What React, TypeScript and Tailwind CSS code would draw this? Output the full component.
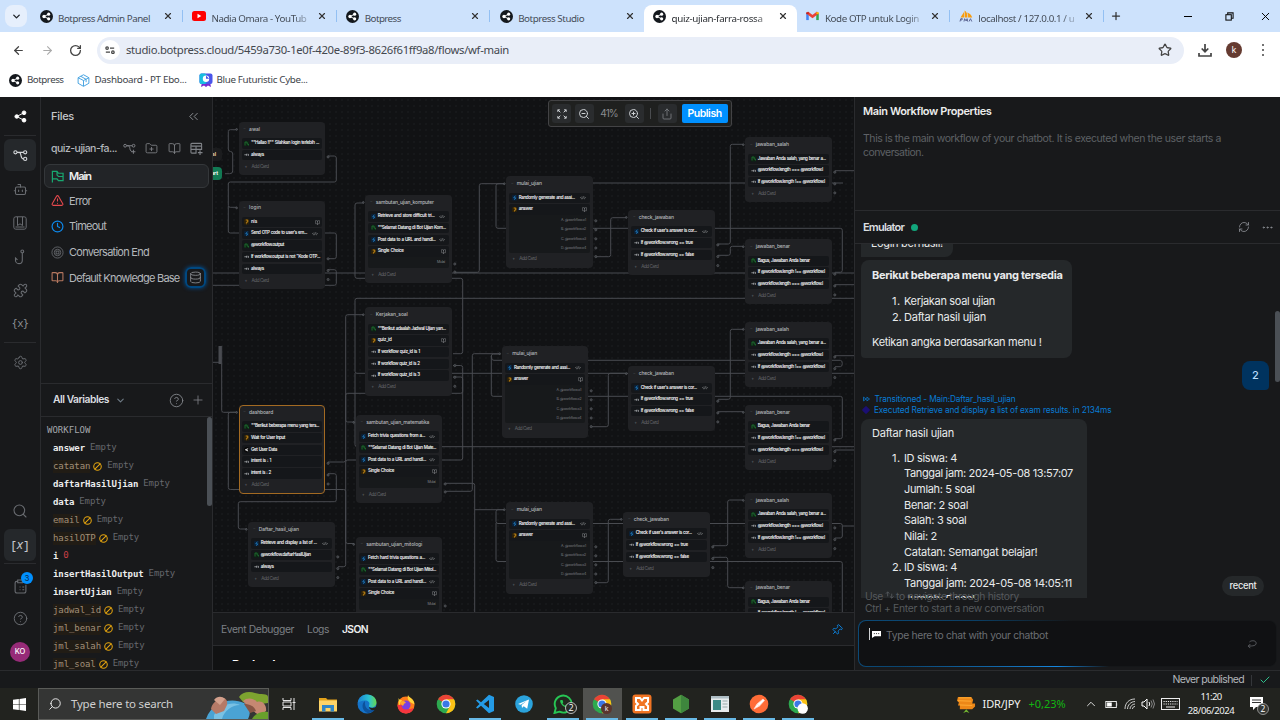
import { useLayoutEffect, useRef, useState } from 'react';
import type { ReactNode } from 'react';
import {
  ArrowLeft, ArrowRight, RotateCw, Star, Puzzle, Settings, Search, CircleHelp, ChevronsLeft,
  FolderPlus, BookOpen, TriangleAlert, Clock, Database, ChevronDown, ChevronUp, Plus, ZoomIn, ZoomOut,
  Share, RefreshCw, Ellipsis, Pin, Check, Bot, X, Ban,
} from 'lucide-react';

/* Single line of text whose tracking is adjusted so that it fills a known width. */
function T({ w, className = '', children }: { w: number; className?: string; children: string }) {
  const ref = useRef<HTMLSpanElement>(null);
  const [spacing, setSpacing] = useState(0);
  useLayoutEffect(() => {
    const natural = ref.current!.getBoundingClientRect().width;
    setSpacing((w - natural) / children.length);
  }, [w, children]);
  return (
    <span ref={ref} className={`inline-block shrink-0 whitespace-pre ${className}`} style={{ letterSpacing: spacing }}>
      {children}
    </span>
  );
}

function BotLogo({ className = 'size-[13px]' }: { className?: string }) {
  return (
    <svg viewBox="0 0 14 14" className={`${className} shrink-0`}>
      <circle cx="7" cy="7" r="7" fill="#14181d" />
      <path d="M4.3 7 9 4.6M4.3 7 9 9.4" stroke="#fff" strokeWidth="1" />
      <circle cx="4.3" cy="7" r="1.8" fill="#fff" />
      <circle cx="9.3" cy="4.5" r="1.7" fill="#fff" />
      <circle cx="9.3" cy="9.5" r="1.7" fill="#fff" />
    </svg>
  );
}

function FlowGlyph({ className, plus }: { className: string; plus?: boolean }) {
  return (
    <svg viewBox="0 0 16 16" className={className} fill="none" stroke="currentColor" strokeWidth="1.2">
      <circle cx="2.6" cy="4.6" r="1.7" />
      <circle cx="13" cy="4.6" r="1.7" />
      {plus ? <path d="M12.8 9.5v5M10.3 12h5" /> : <circle cx="13" cy="11.6" r="1.7" />}
      <path d="M4.3 4.6h7M5 4.6c3 0 3 1 3.500 3.500s1 3.500 2.800 3.500" />
    </svg>
  );
}

function TabIcon({ kind }: { kind: string }) {
  if (kind === 'yt')
    return (
      <svg viewBox="0 0 14 10" className="h-[10px] w-[14px]">
        <rect width="14" height="10" rx="2.500" fill="#f00" />
        <path d="M5.500 2.800v4.400L9.300 5z" fill="#fff" />
      </svg>
    );
  if (kind === 'gmail')
    return (
      <svg viewBox="0 0 14 11" className="h-[10px] w-[13px]" fill="none" strokeWidth="2.800">
        <path d="M1.500 2.500V10" stroke="#4285f4" />
        <path d="M12.500 2.500V10" stroke="#34a853" />
        <path d="M1.200 1.800 7 6.200l5.800-4.400" stroke="#ea4335" />
        <path d="M11.100 3V1.500h2.800v2z" fill="#fbbc04" stroke="none" />
        <path d="M2.900 3V1.500H.1v2z" fill="#c5221f" stroke="none" />
      </svg>
    );
  if (kind === 'pma')
    return (
      <svg viewBox="0 0 14 12" className="h-[12px] w-[14px]">
        <path d="M1.500 7.500 5 2v5.500zM5.600 7.500V.5c2.400 1.500 3 4 2.800 7zM9 7.500c.4-2-.2-4-1-5 2.500.6 4.500 2.500 5.200 5z" fill="#f89c0e" />
        <path d="M1 11.500 1.800 8.700h1.600L2.800 10H1.600M5 11.500l.6-2.800L7.200 11l.9-2.300.5 2.800M10 11.500l1.500-2.800 1.300 2.800" stroke="#5d6693" fill="none" />
      </svg>
    );
  return <BotLogo />;
}

const tabs = [
  { icon: 'bp', label: 'Botpress Admin Panel', w: 92 },
  { icon: 'yt', label: 'Nadia Omara - YouTub', w: 95, fade: true },
  { icon: 'bp', label: 'Botpress', w: 36 },
  { icon: 'bp', label: 'Botpress Studio', w: 66 },
  { icon: 'bp', label: 'quiz-ujian-farra-rossa', w: 91, fade: true, active: true },
  { icon: 'gmail', label: 'Kode OTP untuk Login', w: 94, fade: true },
  { icon: 'pma', label: 'localhost / 127.0.0.1 / u', w: 96, fade: true },
];

function Browser() {
  return (
    <header className="h-[97px] shrink-0 bg-white font-['Noto_Sans','Open_Sans',sans-serif]">
      <div className="flex h-8 items-center bg-[#cde2fc] pl-[5px]">
        <div className="mr-[3px] flex size-[22px] shrink-0 items-center justify-center rounded-lg bg-[#e6effc]">
          <ChevronDown className="size-[11px] text-[#1f2328]" strokeWidth={3} />
        </div>
        {tabs.map((t, i) => (
          <div key={i} className="flex h-8 w-[153.400px] shrink-0 items-center">
            <div
              className={`flex w-full items-center pr-[9px] pl-[9px] ${
                t.active ? 'mt-[5px] h-[27px] rounded-t-lg bg-white pb-[5px]' : 'h-8'
              }`}
            >
              <span className="flex w-[14px] shrink-0 justify-center"><TabIcon kind={t.icon} /></span>
              <span
                className={`ml-[5px] flex-1 overflow-hidden ${
                  t.fade ? '[mask-image:linear-gradient(to_right,black_78%,transparent_97%)]' : ''
                }`}
              >
                <T w={t.w} className={`text-[9.800px] ${t.active ? 'text-[#2c2f33]' : 'text-[#454d58]'}`}>{t.label}</T>
              </span>
              <X className="size-[10px] shrink-0 text-[#333]" strokeWidth={2.800} />
            </div>
            {!t.active && i !== 3 && <span className="h-3 w-px shrink-0 bg-[#93c0f3]" />}
          </div>
        ))}
        <Plus className="ml-[6px] size-[12px] text-[#333]" strokeWidth={2.500} />
        <span className="ml-[62px] h-px w-[8px] bg-black" />
        <svg viewBox="0 0 10 10" className="ml-[33px] size-[9px]" fill="none" stroke="#111" strokeWidth="1.200">
          <rect x="1" y="3" width="6" height="6" />
          <path d="M3 3V1h6v6H7" />
        </svg>
        <X className="ml-[25px] size-[13px] text-black" strokeWidth={1.800} />
      </div>
      <div className="flex h-9 items-center rounded-t-lg bg-white pl-[12px]">
        <ArrowLeft className="size-[13px] text-[#444]" strokeWidth={2.300} />
        <ArrowRight className="ml-4 size-[13px] text-[#aaa]" strokeWidth={2} />
        <RotateCw className="ml-[15px] size-[13px] text-[#444]" strokeWidth={2.400} />
        <div className="ml-[15px] flex h-[27px] w-[1087px] items-center rounded-full bg-[#e9eef8] pr-[12px] pl-[3px]">
          <span className="flex size-[20px] items-center justify-center rounded-full bg-white">
            <svg viewBox="0 0 12 10" className="w-[10px]" fill="none" stroke="#444" strokeWidth="1.500">
              <circle cx="2.500" cy="2.500" r="1.500" /><path d="M6 2.500h5M1 7.500h5" /><circle cx="9.500" cy="7.500" r="1.500" />
            </svg>
          </span>
          <T w={383} className="ml-[6px] text-[11.300px] text-[#43474e]">studio.botpress.cloud/5459a730-1e0f-420e-89f3-8626f61ff9a8/flows/wf-main</T>
          <Star className="ml-auto size-[14px] text-[#444]" strokeWidth={2.200} />
        </div>
        <svg viewBox="0 0 14 14" className="ml-[14px] size-[14px]" fill="none" stroke="#444" strokeWidth="1.700">
          <path d="M7 1v7.500M3.700 5.500 7 8.700l3.300-3.200M1 10v3h12v-3" />
        </svg>
        <span className="ml-[14px] flex size-[16px] items-center justify-center rounded-full bg-[#653b31] text-[9px] text-white">k</span>
        <span className="ml-[20px] flex flex-col gap-[2.500px]">
          <i className="size-[2.300px] rounded-full bg-[#444]" /><i className="size-[2.300px] rounded-full bg-[#444]" /><i className="size-[2.300px] rounded-full bg-[#444]" />
        </span>
      </div>
      <div className="flex h-[24px] items-center pl-[9px] text-[9.800px] text-[#40444a]">
        <BotLogo />
        <T w={36.500} className="ml-[5px]">Botpress</T>
        <svg viewBox="0 0 14 14" className="ml-[13px] size-[13px]" fill="none" stroke="#3f9fe0" strokeWidth="1">
          <path d="M7 .8 12.800 4v6L7 13.300 1.200 10V4zM1.200 4 7 7l5.800-3M7 7v6M4 2.500l5.800 3.200v3" />
        </svg>
        <T w={92} className="ml-[5px]">Dashboard - PT Ebo...</T>
        <svg viewBox="0 0 14 14" className="ml-[12px] size-[14px]">
          <path d="m3 9-1 5 3-1.500L7 14l2-1.500 3 1.500-1-5z" fill="#7a2bd2" />
          <rect x=".5" y=".5" width="13" height="10.500" rx="2" fill="#4a55ea" />
          <rect x=".5" y=".5" width="7" height="10.500" rx="2" fill="#19bde0" />
          <circle cx="7" cy="5.700" r="3.200" fill="#fff" /><path d="M7 2.500v3.200h3.200" fill="#4a55ea" />
        </svg>
        <T w={91} className="ml-[4px]">Blue Futuristic Cybe...</T>
      </div>
    </header>
  );
}

function RailItem({ children, className, active }: { children: ReactNode; className: string; active?: boolean }) {
  return (
    <div className={`flex w-10 shrink-0 items-center justify-center ${className}`}>
      <div className={`flex size-8 shrink-0 items-center justify-center rounded-md ${active ? 'bg-[#25282b]' : ''}`}>{children}</div>
    </div>
  );
}

function Rail() {
  return (
    <nav className="flex w-[41px] shrink-0 flex-col border-r border-[#2a2b2e] text-[#696c71]">
      <div className="flex h-[38px] items-center justify-center">
        <svg viewBox="0 0 14 14" className="size-[13px]" fill="#fff" stroke="#fff">
          <path d="M3 7 11 2.800M3 7l8 4.200" /><circle cx="2.900" cy="7" r="1.900" /><circle cx="10.800" cy="3" r="2" /><circle cx="10.800" cy="11" r="2" />
        </svg>
      </div>
      <div className="mx-1 h-px bg-[#2a2b2e]" />
      <RailItem className="h-[38px]" active><FlowGlyph className="size-[15px] text-[#d5d8db]" /></RailItem>
      <RailItem className="h-[30px]"><Bot className="size-[15px]" strokeWidth={1.700} /></RailItem>
      <RailItem className="h-[37px]">
        <svg viewBox="0 0 14 14" className="size-[14px]" fill="none" stroke="currentColor"><rect x=".8" y=".8" width="12.400" height="12.400" rx="2" /><path d="M4.500 1v8.500L7 7.800l2.500 1.700V1M2.500 11h9" /></svg>
      </RailItem>
      <RailItem className="h-[31px]">
        <svg viewBox="0 0 14 16" className="h-[16px] w-[14px]" fill="none" stroke="currentColor" strokeWidth="1.100"><circle cx="9.300" cy="2.400" r="1.400" /><path d="M9.300 3.800v7.400a3.400 3.400 0 0 1-6.800 0V9l2 1.800" /></svg>
      </RailItem>
      <RailItem className="h-[37px]"><Puzzle className="size-[15px]" strokeWidth={1.700} /></RailItem>
      <RailItem className="h-[30px]"><T w={17} className="font-['DejaVu_Sans_Mono',monospace] text-[10.500px] text-[#8b8e93]">{'{x}'}</T></RailItem>
      <div className="mx-1 mt-[3px] h-px shrink-0 bg-[#2a2b2e]" />
      <RailItem className="h-[38px]"><Settings className="size-[15px]" strokeWidth={1.600} /></RailItem>
      <div className="flex-1" />
      <RailItem className="h-[34px]"><Search className="size-[16px]" strokeWidth={1.600} /></RailItem>
      <RailItem className="h-[34px]" active>
        <span className="flex items-center font-['Noto_Sans',sans-serif] text-[13px] leading-none text-[#c3c6ca]">[<i className="px-px pb-px">x</i>]</span>
      </RailItem>
      <div className="mx-1 mt-px h-px shrink-0 bg-[#2a2b2e]" />
      <div className="relative flex h-[40px] shrink-0 items-center justify-center pt-[4px]">
        <svg viewBox="0 0 14 16" className="h-[15px] w-[13px]" fill="none" stroke="currentColor" strokeWidth="1.200"><path d="M4 2.500H3A1.800 1.800 0 0 0 1.200 4.300v8.900A1.800 1.800 0 0 0 3 15h8a1.800 1.800 0 0 0 1.800-1.800V6M4 1h5v3H4zM6 8.500h1M9 8.500h2M6 11.500h1M9 11.500h2" /></svg>
        <span className="absolute top-[8px] left-[21px] flex size-[12px] items-center justify-center rounded-full bg-[#0090ff] text-[8px] text-[#0d2b4a]">3</span>
      </div>
      <RailItem className="h-[29px]"><CircleHelp className="size-[15px]" strokeWidth={1.600} /></RailItem>
      <div className="flex h-[37px] shrink-0 items-center justify-center">
        <span className="flex size-5 items-center justify-center rounded-full bg-[#962b78] text-[7.500px] font-medium text-white">KO</span>
      </div>
    </nav>
  );
}

const variables: [string, string, boolean][] = [
  ['answer', 'Empty', false], ['catatan', 'Empty', true], ['daftarHasilUjian', 'Empty', false], ['data', 'Empty', false],
  ['email', 'Empty', true], ['hasilOTP', 'Empty', true], ['i', '0', false], ['insertHasilOutput', 'Empty', false],
  ['insertUjian', 'Empty', false], ['jadwal_id', 'Empty', true], ['jml_benar', 'Empty', true], ['jml_salah', 'Empty', true],
  ['jml_soal', 'Empty', true],
];

function Files() {
  const row = 'flex h-[25.700px] items-center gap-[5px] pl-[7px]';
  return (
    <aside className="flex w-[172px] shrink-0 flex-col border-r border-[#2a2b2e] text-[#b4b7bb]">
      <div className="flex h-[38px] items-center pr-[11px] pl-[10px]">
        <T w={23} className="text-[11px] font-medium text-[#c5c7ca]">Files</T>
        <ChevronsLeft className="ml-auto size-[15px] text-[#8a8d92]" strokeWidth={1.600} />
      </div>
      <div className="flex h-[27px] items-center pl-[10px] text-[#7f8287]">
        <T w={66} className="mr-[6px] text-[10.500px] font-medium text-[#b4b7bb]">quiz-ujian-fa...</T>
        <FlowGlyph plus className="size-[13px]" />
        <FolderPlus className="ml-[9px] size-[13px]" strokeWidth={1.600} />
        <BookOpen className="ml-[10px] size-[13px]" strokeWidth={1.600} />
        <svg viewBox="0 0 14 14" className="ml-[9px] size-[13px]" fill="none" stroke="currentColor" strokeWidth="1.200"><rect x="1" y="1.500" width="11.500" height="3" rx="1" /><path d="M1 4v7a1 1 0 0 0 1 1h5M1 8h11.500V4M6.500 4.500V12M10.800 9v5M8.500 11.500h5" /></svg>
      </div>
      <div className="mx-[3px] mt-[2px] flex flex-col text-[11px]">
        <div className="flex h-[24px] items-center gap-[5px] rounded-md border border-[#34373a] bg-[#222427] pl-[6px]">
          <svg viewBox="0 0 14 14" className="size-[13px]" fill="none" stroke="#18a870" strokeWidth="1.300"><path d="M1.500 13.500V1.500h5l1.500 2h5v8H8l-1.500-2H1.500M6.500 1.500v4L8 7h5" /></svg>
          <T w={22} className="font-semibold text-[#eff0f1]">Main</T>
        </div>
        <div className={row}><TriangleAlert className="size-[13px] text-[#e5484d]" /><T w={22}>Error</T></div>
        <div className={row}><Clock className="size-[13px] text-[#0d87e9]" strokeWidth={2.200} /><T w={37}>Timeout</T></div>
        <div className={row}>
          <svg viewBox="0 0 14 14" className="size-[13px]" fill="none" stroke="#63666b"><circle cx="7" cy="7" r="6" /><circle cx="7" cy="7" r="3.500" /><rect x="5.500" y="5.500" width="3" height="3" /></svg>
          <T w={80}>Conversation End</T>
        </div>
        <div className={row}>
          <BookOpen className="size-[13px] shrink-0 text-[#b5775f]" /><T w={110.500}>Default Knowledge Base</T>
          <span className="flex size-[21px] shrink-0 items-center justify-center rounded-md border-2 border-[#004880] shadow-[0_0_4px_#00529a]"><Database className="size-[13px] text-[#8a8d92]" strokeWidth={1.600} /></span>
        </div>
      </div>
      <div className="flex-1" />
      <div className="flex h-[34px] shrink-0 items-center border-y border-[#2a2b2e] pr-[7px] pl-[12px] text-[#7f8287]">
        <T w={56} className="text-[10.300px] font-semibold text-[#dcdee0]">All Variables</T>
        <ChevronDown className="ml-[6px] size-[11px] text-[#6f7b86]" strokeWidth={2.400} />
        <CircleHelp className="ml-auto size-[15px]" strokeWidth={1.500} />
        <Plus className="ml-[7px] size-[14px]" strokeWidth={1.400} />
      </div>
      <div className="flex h-[253px] shrink-0 justify-between overflow-hidden font-['DejaVu_Sans_Mono',monospace] text-[9px]">
        <div className="pt-[6px]">
          <div className="flex h-[16px] items-center pl-[6px]"><T w={43.500} className="text-[9px] text-[#a3a6ab]">WORKFLOW</T></div>
          {variables.map(([name, value, unused]) => (
            <div key={name} className="flex h-[18px] items-center pl-[12px]">
              <T w={name.length * 5.330} className={`leading-[13px] ${unused ? 'bg-[#211c15] text-[#a18f78]' : 'font-bold text-[#eceded]'}`}>{name}</T>
              {unused && <Ban className="ml-[3px] size-[9px] -scale-x-100 text-[#e5a50f]" strokeWidth={2.800} />}
              <T w={value.length * 5.300} className={`ml-[5px] ${value === '0' ? 'text-[#c93f45]' : 'text-[#66686d]'}`}>{value}</T>
            </div>
          ))}
        </div>
        <div className="h-[89px] w-[5px] rounded-full bg-[#4b5056]" />
      </div>
    </aside>
  );
}

type Card = [icon: string, text: string, width: number, tail?: string];
type FlowNode = { x: number; y: number; title: string; tw: number; cards: Card[]; extra?: string; selected?: boolean };

const salah = (y: number): FlowNode => ({
  x: 745.300, y, title: 'jawaban_salah', tw: 33,
  cards: [['msg', 'Jawaban Anda salah, yang benar a...', 68], ['if', '@workflow.length === @workflow.l', 65], ['if', 'If @workflow.length !== @workflow.l', 67]],
});
const benar = (y: number): FlowNode => ({
  x: 745.300, y, title: 'jawaban_benar', tw: 34,
  cards: [['msg', 'Bagus, Jawaban Anda benar', 52], ['if', 'If @workflow.length !== @workflow.l', 67], ['if', '@workflow.length === @workflow.l', 65]],
});
const check = (x: number, y: number): FlowNode => ({
  x, y, title: 'check_jawaban', tw: 35,
  cards: [['code', "Check if user's answer is cor...", 56, 'code'], ['if', 'If @workflow.wrong == true', 52], ['if', 'If @workflow.wrong == false', 53]],
});
const mulai = (x: number, y: number): FlowNode => ({
  x, y, title: 'mulai_ujian', tw: 25, extra: 'answers',
  cards: [['code', 'Randomly generate and assi...', 56, 'code'], ['ask', 'answer', 14, 'book']],
});
const sambutan = (x: number, y: number, title: string, tw: number, first: string, second: string): FlowNode => ({
  x, y, title, tw, extra: 'choice',
  cards: [['code', first, 57, 'code'], ['msg', second, 68], ['code', 'Post data to a URL and handl...', 58, 'code'], ['ask', 'Single Choice', 26, 'book']],
});

const nodes: FlowNode[] = [
  { x: 238.600, y: 122, title: 'awal', tw: 11, cards: [['msg', '**Hallao !!** Silahkan login terlebih ...', 68], ['if', 'always', 13]] },
  {
    x: 238.600, y: 200.500, title: 'login', tw: 12,
    cards: [['ask', 'nis', 6, 'book'], ['code', "Send OTP code to user's em...", 56, 'code'], ['msg', '@workflow.output', 33], ['if', 'If workflow.output is not "Kode OTP...', 69], ['if', 'always', 13]],
  },
  sambutan(365.300, 195, 'sambutan_ujian_komputer', 58, 'Retrieve and store difficult tri...', '**Selamat Datang di Bot Ujian Kom...'),
  {
    x: 365.300, y: 307.300, title: 'Kerjakan_soal', tw: 32,
    cards: [['msg', '**Berikut adaalah Jadwal Ujian yan...', 68], ['ask', 'quiz_id', 14, 'book'], ['if', 'If workflow quiz_id is 1', 42], ['if', 'If workflow quiz_id is 2', 42], ['if', 'If workflow quiz_id is 3', 42]],
  },
  {
    x: 238.600, y: 405, title: 'dashboard', tw: 24, selected: true,
    cards: [['msg', '**Berikut beberapa menu yang ters...', 68], ['ask', 'Wait for User Input', 34], ['user', 'Get User Data', 26], ['if', 'intent is : 1', 20], ['if', 'intent is : 2', 20]],
  },
  {
    x: 248.300, y: 522, title: 'Daftar_hasil_ujian', tw: 40,
    cards: [['code', 'Retrieve and display a list of ...', 56, 'code'], ['msg', '@workflow.daftarHasilUjian', 50], ['if', 'always', 13]],
  },
  sambutan(355.700, 415, 'sambutan_ujian_matematika', 63, 'Fetch trivia questions from a...', '**Selamat Datang di Bot Ujian Mate...'),
  sambutan(355.700, 537, 'sambutan_ujian_mitologi', 56, 'Fetch hard trivia questions a...', '**Selamat Datang di Bot Ujian Mitol...'),
  mulai(506.300, 176.300), mulai(501.700, 346.300), mulai(506.300, 502.300),
  check(628.300, 210), check(628.300, 366.300), check(623.300, 512),
  salah(137.300), salah(322), salah(493), benar(239.300), benar(405), benar(580.500),
];

const edges = [
  'M225 173.700H229.700Q232.700 173.700 232.700 171V154Q232.700 151.500 230.500 151.500Q228.300 151.500 228.300 149V131.700Q228.300 129.700 230.300 129.700H237',
  'M328 156H334.300Q336.300 156 336.300 158V180Q336.300 182 334.300 182H230.300Q228.300 182 228.300 184V205.300Q228.300 207.300 230.300 207.300H237',
  'M228.300 206V231Q228.300 233 230.300 233H334.300Q336.300 233 336.300 235V256.700Q336.300 258.700 334.300 258.700H328',
  'M328 269.700H334.300Q336.300 269.700 336.300 271.700V283.300Q336.300 285.300 334.300 285.300H212',
  'M212 273H854',
  'M364 203H357Q355 203 355 205V276.300Q355 278.300 357 278.300H460.700Q462.700 278.300 462.700 280.300V351.700Q462.700 353.700 460.700 353.700H453',
  'M854 298.300H357Q355 298.300 355 300.300V371.300Q355 373.300 357 373.300H854',
  'M364 314.700H347.700Q345.700 314.700 345.700 316.700V460Q345.700 462 343.700 462H328',
  'M453 365.500H460.700Q462.700 365.500 462.700 367.500V391.300Q462.700 393.300 460.700 393.300H347.700Q345.700 393.300 345.700 395.300V420Q345.700 422 347.700 422H354',
  'M453 377H460.700Q462.700 377 462.700 379V458Q462.700 460 460.700 460H347.700Q345.700 460 345.700 462',
  'M221.700 346V410.300Q221.700 412.300 223.700 412.300H237M212 362.300H220',
  'M237 412.300H230.300Q228.300 412.300 228.300 414.300V487.500Q228.300 489.500 230.300 489.500H343.700Q345.700 489.500 345.700 491.500V564.700Q345.700 566.700 343.700 566.700H338',
  'M345.700 462V541.500Q345.700 543.500 347.700 543.500H354',
  'M328 473.700H334.300Q336.300 473.700 336.300 475.700V499.700Q336.300 501.700 334.300 501.700H240.300Q238.300 501.700 238.300 503.700V527Q238.300 529 240.300 529H247',
  'M355 373V444.700Q355 446.700 357 446.700H854',
  'M445 483.300H472.700Q474.700 483.300 474.700 485.300V612M474.700 509.700H504',
  'M445 491.300H470.300Q472.300 491.300 472.300 489.300V355.700Q472.300 353.700 474.300 353.700H500',
  'M454 272.300H477.300Q479.300 272.300 479.300 270.300V185.700Q479.300 183.700 481.300 183.700H505',
  'M505 183.700H498Q496 183.700 496 185.700V226.300Q496 228.300 498 228.300H840.300Q842.300 228.300 842.300 230.300V270.300Q842.300 272.300 840.300 272.300H835',
  'M593 183H843', 'M596 256.700H608.700Q610.700 256.700 610.700 254.700V219.700Q610.700 217.700 612.700 217.700H627',
  'M718 244H728.300Q730.300 244 730.300 242V146.300Q730.300 144.300 732.300 144.300H743',
  'M718 255.300H728.300Q730.300 255.300 730.300 253.300V248.300Q730.300 246.300 732.300 246.300H743',
  'M835 170.700H854M835 284.700H854M835 355.700H854M835 450H854M842.300 526H854',
  'M718 399.300H728.300Q730.300 399.300 730.300 397.300V331.300Q730.300 329.300 732.300 329.300H743', 'M718 411.700H743',
  'M500 354H493.300Q491.300 354 491.300 356V394.300Q491.300 396.300 493.300 396.300H840.300Q842.300 396.300 842.300 398.300V436.700Q842.300 438.700 840.300 438.700H835',
  'M491.300 356Q491.300 360.300 494 360.300H840.300Q842.300 360.300 842.300 363.500Q842.300 366.700 840.300 366.700H835',
  'M592 426.700H606.300Q608.300 426.700 608.300 424.700V375.300Q608.300 373.300 610.300 373.300H627',
  'M504 509.700H498Q496 509.700 496 511.700V521.500Q496 523.500 498 523.500H840.300Q842.300 523.500 842.300 525.500V536Q842.300 538 840.300 538H835',
  'M496 523V559.500Q496 561.500 498 561.500H840.300Q842.300 561.500 842.300 563.500V612',
  'M596 582.700H606.300Q608.300 582.700 608.300 580.700V521.300Q608.300 519.300 610.300 519.300H622',
  'M713 545.700H725.700Q727.700 545.700 727.700 543.700V502Q727.700 500 729.700 500H743',
  'M713 557.300H725.700Q727.700 557.300 727.700 559.300V585.700Q727.700 587.700 729.700 587.700H743',
];

function CardGlyph({ kind }: { kind: string }) {
  return (
    <svg viewBox="0 0 8 8" className="ml-[2.300px] size-[5.500px] shrink-0" fill="none">
      {kind === 'msg' && <><rect width="8" height="8" rx="1.500" fill="#0d2414" /><path d="M1.500 6.500v-5h3v3H6.500v2" stroke="#26813a" /></>}
      {kind === 'if' && <path d="M.5 4H4M3.800 2.500v3M5 4h3M6 2.500 7.500 4 6 5.500" stroke="#b5b7ba" />}
      {kind === 'code' && <><rect width="8" height="8" rx="1.500" fill="#0b2036" /><path d="M4.800 1 2.500 4.200h3L3.400 7" stroke="#2590dd" /></>}
      {kind === 'ask' && <><rect width="8" height="8" rx="1.500" fill="#2b2009" /><path d="M2.500 1.500h3v3h-2v1M3.500 6.500v1" stroke="#e09a1a" strokeWidth="1.200" /></>}
      {kind === 'user' && <><circle cx="4" cy="4" r="4" fill="#080808" /><path d="M2 4l4-1.500M2 4l4 1.800" stroke="#fff" strokeWidth="1.300" /></>}
    </svg>
  );
}

function Node({ n }: { n: FlowNode }) {
  return (
    <div
      className={`absolute w-[86.700px] rounded-[4px] bg-[#202124] px-[3px] pb-[3px] ${n.selected ? 'outline -outline-offset-1 outline-[#a36a22]' : ''}`}
      style={{ left: n.x - 213, top: n.y - 97 }}
    >
      <div className="flex h-[16.300px] items-center pb-[1.500px] pl-[2px]">
        <span className="mr-[3.500px] text-[4px] leading-none text-[#55585c]">–</span>
        <T w={n.tw} className="text-[5px] leading-none font-medium text-[#b7b9bc]">{n.title}</T>
      </div>
      <div className="flex flex-col gap-[1.200px]">
        {n.cards.map(([icon, text, width, tail], i) => (
          <div key={i} className={`flex h-[10.500px] items-center bg-[#15171a] ${n.extra && i === n.cards.length - 1 ? 'rounded-t-[2px]' : 'rounded-[2px]'}`}>
            <CardGlyph kind={icon} />
            <T w={width} className="ml-[1.600px] text-[4.500px] leading-none font-semibold [word-spacing:0.500px] text-[#f2f3f4]">{text}</T>
            {tail === 'code' && (
              <svg viewBox="0 0 10 6" className="mr-[4px] ml-auto h-[3.600px] w-[6px]" fill="none" stroke="#a5a7aa" strokeWidth="1"><path d="M3 1 1 3l2 2M7 1l2 2-2 2M5.600.8 4.400 5.200" /></svg>
            )}
            {tail === 'book' && <BookOpen className="mr-[2.500px] ml-auto size-[5px] text-[#a5a7aa]" />}
          </div>
        ))}
      </div>
      {n.extra === 'choice' && (
        <div className="flex h-[11.500px] items-center justify-end rounded-b-[2px] bg-[#17191b] pr-[4px] text-[3.600px] leading-none text-[#85878a]"><T w={8}>Mulai</T></div>
      )}
      {n.extra === 'answers' && (
        <div className="mt-[0.700px] flex h-[37.500px] flex-col items-end justify-around rounded-b-[2px] bg-[#17191b] pt-px pr-[4px] text-[3.500px] leading-none text-[#7b7d81]">
          {['A. @workflow.o1', 'B. @workflow.o2', 'C. @workflow.o3', 'D. @workflow.o4'].map((a) => <T key={a} w={25}>{a}</T>)}
        </div>
      )}
      <div className="flex h-[12px] items-center gap-[4px] pt-[1.500px] pl-[3px] text-[4.500px] leading-none text-[#696b6f]">
        <span>+</span><T w={17}>Add Card</T>
      </div>
    </div>
  );
}

const ports: [number, number][] = nodes.flatMap((n): [number, number][] => {
  const right = n.x + 89.500;
  if (n.extra === 'answers') return [44.500, 53.500, 62.500, 71.700, 80.300].map((d): [number, number] => [right, n.y + d]);
  if (n.extra === 'choice') return [[right, n.y + 69], [right, n.y + 77]];
  const last = n.y + 21.700 + (n.cards.length - 1) * 11.700 + 1.500;
  return n.cards.length === 2 ? [[right, last]] : [[right, last - 11.700], [right, last], [right, last + 9]];
});

function Canvas() {
  return (
    <div className="relative h-[515px] overflow-hidden bg-[#111214] bg-[radial-gradient(#1d1e21_0.600px,transparent_0.800px)] bg-size-[6px_6px]">
      <svg viewBox="213 97 641 515" className="absolute inset-0 h-[515px] w-[641px]" fill="none" stroke="#494b50" strokeWidth="1">
        {edges.map((d) => <path key={d} d={d} />)}
        <path d="M220 346v18" strokeWidth="3" />
      </svg>
      <span className="absolute top-[51px] left-[-6px] flex h-[13px] w-[15px] items-center justify-end rounded bg-[#1b1c1e] pr-[6px] text-[5px] font-bold text-[#e9dfb0]">al</span>
      <span className="absolute top-[70px] left-[-8px] flex h-[13px] w-[17px] items-center justify-end rounded bg-[#127a54] pr-[4px] text-[5px] font-bold text-white">art</span>
      {nodes.map((n, i) => <Node key={i} n={n} />)}
      <svg viewBox="213 97 641 515" className="absolute inset-0 h-[515px] w-[641px]" fill="#34363a" stroke="#606368" strokeWidth=".6">
        {ports.map(([x, y], i) => <circle key={i} cx={x} cy={y} r="1.100" />)}
        {nodes.map((n, i) => <circle key={i} cx={n.x - 2} cy={n.y + 7.400} r="0.900" />)}
      </svg>
      <div className="absolute top-[3px] left-[335px] flex h-[27px] w-[184px] items-center rounded-[3px] border border-[#434345] bg-[#1f201f] pl-[3px] text-[#cdd0d3]">
        <span className="flex size-[19px] items-center justify-center rounded-[3px] bg-[#2a2c2e]">
          <svg viewBox="0 0 12 12" className="size-[10px]" fill="none" stroke="currentColor" strokeWidth="1.200"><path d="M1 3.500V1h2.500M1 1l3 3M8.500 1H11v2.500M11 1 8 4M1 8.500V11h2.500M1 11l3-3M11 8.500V11H8.500M11 11 8 8" /></svg>
        </span>
        <span className="ml-[3.500px] flex size-[19px] items-center justify-center rounded-[3px] bg-[#2a2c2e]"><ZoomOut className="size-[12px]" /></span>
        <T w={17.500} className="mx-[6.800px] text-[10px] text-[#8a8c8f]">41%</T>
        <span className="flex size-[19px] items-center justify-center rounded-[3px] bg-[#2a2c2e]"><ZoomIn className="size-[12px]" /></span>
        <span className="mx-[6.500px] h-[11px] w-px bg-[#4a4c4f]" />
        <span className="flex size-[19px] items-center justify-center rounded-[3px] bg-[#2a2c2e]"><Share className="size-[12px] text-[#7b7e83]" strokeWidth={1.700} /></span>
        <span className="ml-[5px] flex h-[19px] w-[46px] items-center justify-center rounded-[2px] bg-[#0090ff]"><T w={34} className="text-[10.500px] font-semibold text-white">Publish</T></span>
      </div>
    </div>
  );
}

function Debugger() {
  return (
    <div className="flex flex-1 flex-col border-t border-[#2a2b2e]">
      <div className="flex h-[33px] items-center gap-[13px] border-b border-[#2a2b2e] pt-px pr-[11px] pl-[8px] text-[10.300px] text-[#7d8085]">
        <T w={73}>Event Debugger</T><T w={22}>Logs</T><T w={26} className="font-semibold text-[#eff0f1]">JSON</T>
        <Pin className="ml-auto size-[12px] rotate-45 text-[#0e86e6]" strokeWidth={1.800} />
      </div>
      <div className="flex-1 bg-[#111213] pt-[11px] pl-[19px]">
        <div className="flex h-[4px] items-start overflow-hidden"><T w={43} className="text-[12px] leading-[15px] font-bold text-white">Payload</T></div>
      </div>
    </div>
  );
}

const result: [string, number][] = [
  ['Tanggal jam: 2024-05-08 13:57:07', 169], ['Jumlah: 5 soal', 70.500], ['Benar: 2 soal', 64],
  ['Salah: 3 soal', 62.500], ['Nilai: 2', 33], ['Catatan: Semangat belajar!', 133.500],
];

function Emulator() {
  return (
    <aside className="flex w-[426px] shrink-0 flex-col border-l border-[#2a2b2e]">
      <div className="h-[114px] shrink-0 border-b border-[#2a2b2e] pt-[6px] pl-[8px]">
        <div className="flex h-4 items-center"><T w={128.500} className="text-[11px] font-semibold text-[#eceded]">Main Workflow Properties</T></div>
        <div className="mt-[12.500px] flex flex-col items-start text-[10.500px] leading-[14.300px] text-[#5e6165]">
          <T w={358}>This is the main workflow of your chatbot. It is executed when the user starts a</T>
          <T w={60.500}>conversation.</T>
        </div>
      </div>
      <div className="flex h-[33px] shrink-0 items-center border-b border-[#2a2b2e] pr-[6px] pl-[8px] text-[#8a8d92]">
        <T w={41} className="text-[11px] font-semibold text-[#dcdee0]">Emulator</T>
        <span className="ml-[7px] size-[7px] rounded-full bg-[#12a67c]" />
        <RefreshCw className="ml-auto size-[12px]" strokeWidth={1.700} /><Ellipsis className="ml-[11px] size-[13px]" strokeWidth={1.800} />
      </div>
      <div className="relative flex h-[354px] shrink-0 overflow-hidden text-[11px] text-[#e9ebec]">
        <div className="flex-1 pl-[6px]">
          <div className="flex h-[13px] w-[92px] items-start overflow-hidden rounded-br-lg bg-[#25282a] pl-[10px]">
            <T w={72} className="-mt-[9.500px] leading-4">Login berhasil!</T>
          </div>
          <div className="mt-[3px] h-[98px] w-[211px] rounded-lg rounded-bl-sm bg-[#25282a] pt-[7px] pl-[11px]">
            <div className="flex h-4 items-center"><T w={190.500} className="font-bold">Berikut beberapa menu yang tersedia</T></div>
            <ol className="mt-[9.500px] pl-[20px] leading-[16.200px]">
              <li className="flex"><T w={12}>1. </T><T w={91}>Kerjakan soal ujian</T></li>
              <li className="flex"><T w={12}>2. </T><T w={82}>Daftar hasil ujian</T></li>
            </ol>
            <div className="mt-[9.500px] flex h-4 items-center"><T w={169.500}>Ketikan angka berdasarkan menu !</T></div>
          </div>
          <div className="mt-[3px] ml-[381px] flex h-[29px] w-[27px] items-center justify-center rounded-lg rounded-br-sm bg-[#00335f] font-medium text-[#b9dcfa]">2</div>
          <div className="mt-[4px] text-[8.300px] leading-[10.500px] text-[#087bd4]">
            <div className="flex items-center">
              <svg viewBox="0 0 10 8" className="mr-[3.500px] ml-[1px] h-[6px] w-[9px]" fill="none" stroke="currentColor"><path d="M1 1.500 4.500 4 1 6.500zM5.500 1.500 9 4 5.500 6.500z" /></svg>
              <T w={141}>Transitioned - Main:Daftar_hasil_ujian</T>
            </div>
            <div className="flex items-center"><i className="mr-[5px] ml-[2px] size-[6px] rotate-45 rounded-[1px] bg-[#1b0f73]" /><T w={237.500}>Executed Retrieve and display a list of exam results. in 2134ms</T></div>
          </div>
          <div className="mt-[3.500px] h-[190px] w-[226px] rounded-t-lg bg-[#25282a] pt-[6.500px] pl-[11px]">
            <div className="flex h-4 items-center"><T w={82}>Daftar hasil ujian</T></div>
            <div className="mt-[9.800px] flex flex-col items-start pl-[20px] leading-[15.650px]">
              <div className="flex"><T w={12}>1. </T><T w={53}>ID siswa: 4</T></div>
              {result.map(([line, width]) => <T key={line} w={width} className="ml-[12px]">{line}</T>)}
              <div className="flex"><T w={12}>2. </T><T w={53}>ID siswa: 4</T></div>
              <T w={168} className="ml-[12px]">Tanggal jam: 2024-05-08 14:05:11</T>
              <T w={70.500} className="ml-[12px]">Jumlah: 5 soal</T>
            </div>
          </div>
        </div>
        <div className="mt-[67px] h-[71px] w-[5px] rounded-full bg-[#4b5056]" />
        <span className="absolute right-[16px] bottom-[2px] flex h-[20px] w-[42px] items-center justify-center rounded-full bg-[#25282a]"><T w={27} className="text-[9.300px] font-medium">recent</T></span>
      </div>
      <div className="relative z-10 -mt-[8px] flex flex-col items-start pl-[10px] text-[10.300px] leading-[12px] text-[#56595d]">
        <span className="flex"><T w={18}>Use</T><svg viewBox="0 0 10 10" className="mx-[2px] mt-px size-[9px]" fill="none" stroke="currentColor"><path d="M1 3 3 1l2 2M3 1v5M5.500 6 7.500 8l2-2M7.500 8V3" /></svg><T w={123}>to navigate through history</T></span>
        <T w={179}>Ctrl + Enter to start a new conversation</T>
      </div>
      <div className="mx-[3px] mt-[6px] h-[47px] rounded-lg bg-[linear-gradient(100deg,#0b4a78_0%,#0a3e64_28%,#151719_50%)] p-px">
        <div className="relative flex h-full rounded-[7px] bg-[#101113] pt-[7px] pl-[10px] text-[10.300px] text-[#6b6e72]">
          <span className="absolute -bottom-px left-10 h-[1.500px] w-[210px] bg-linear-to-r from-transparent via-[#1587e0] via-75% to-transparent" />
          <span className="h-3 w-px bg-[#cfd1d4]" />
          <svg viewBox="0 0 12 10" className="mt-[2px] ml-px h-[9px] w-[11px]"><path d="M1 1h10v6H4L1 9z" fill="#fff" /><path d="M3 4h1.200M5.400 4h1.200M7.800 4H9" stroke="#333" /></svg>
          <T w={162} className="ml-[4px] leading-[15px]">Type here to chat with your chatbot</T>
          <svg viewBox="0 0 12 12" className="mt-[11px] mr-[19px] ml-auto size-[10px]" fill="none" stroke="#65686c"><path d="M3 3.500c3-2.500 8-1.500 8 1.500S7 8.500 1.500 8.500M4 6 1.500 8.500 4 11" /></svg>
        </div>
      </div>
    </aside>
  );
}

function Chrome({ children }: { children?: ReactNode }) {
  return (
    <svg viewBox="0 0 20 20" className="size-[20px]">
      <circle cx="10" cy="10" r="9.300" fill="#2da94f" />
      <path d="M10 10 1.950 5.350A9.300 9.300 0 0 1 18.050 5.350z" fill="#ea4335" />
      <path d="M10 5.350h8.050A9.300 9.300 0 0 1 10 19.300L14 12z" fill="#fbc116" />
      <circle cx="10" cy="10" r="4.600" fill="#fff" /><circle cx="10" cy="10" r="3.600" fill="#3b78e7" />
      {children}
    </svg>
  );
}

const Svg = ({ children }: { children: ReactNode }) => <svg viewBox="0 0 20 20" className="size-[20px]">{children}</svg>;

const apps: { icon: ReactNode; open?: boolean; active?: boolean }[] = [
  { icon: <Svg><path d="M4 4v2.500h8V4M4 16v-2.500h8V16M4 8h8v4H4zM15 4v12M13.500 8.500h3" fill="none" stroke="#e6e6e6" /></Svg> },
  { open: true, icon: <Svg><path d="M1 4h7l1.500 1.500H19V9H1z" fill="#e3a21a" /><rect x="1" y="6.500" width="18" height="11" fill="#fdd468" /><path d="M4 17.500V11h12v6.500h-3.500V14h-5v3.500z" fill="#2f86c8" /></Svg> },
  { icon: <Svg><defs><linearGradient id="edge" x1="0" x2="1"><stop stopColor="#1a7fd6" /><stop offset=".6" stopColor="#2bc3d2" /><stop offset="1" stopColor="#67d84f" /></linearGradient></defs><circle cx="10" cy="10" r="9.500" fill="#1573c9" /><path d="M.6 9C1.500 3 6 .5 10 .5c6 0 9.500 4 9.500 8 0 3-2.500 5-5 5-2 0-3-1-2.500-2 1.500-3-1-5-4-5-3.500 0-6.500 1.500-7.400 2.500" fill="url(#edge)" /><path d="M8 7c-4 3-3 10 2.500 12C15 19 17.500 16.500 18 15c-4 2.500-11 1-10-8" fill="#0d529b" /><path d="M19 15.500c-3 1.500-7 .5-7-2.500 2 1.500 6 1.500 8-1.500v4z" fill="#22231f" /></Svg> },
  { icon: <Svg><circle cx="10" cy="11" r="8.500" fill="#ff7b1b" /><path d="M12 1c1 3 6.500 4 6.500 9.500L14 8c-2-2-3-4-2-7M2.500 4c1 2 1.500 2 3.500 2L3 12z" fill="#ffd43a" /><path d="M1.500 11c0 5 4 8.500 8.500 8.500s7-3 8-6c-3 2.500-9 2-12-2.500z" fill="#f5363f" /><circle cx="10" cy="11" r="4.500" fill="#7a3fe0" /><path d="M4 8c3-2 5-1 6 1-2 0-2 1-3 3-1-1-3-2-3-4" fill="#ffa52c" /></Svg> },
  { icon: <Chrome /> },
  { open: true, icon: <Svg><path d="M14 .8 19 3v14l-5 2.200-8-7.500-3.500 2.800L1 13.600 4.500 10 1 6.400l1.500-.9L6 8.300zM14 6l-5.200 4L14 14z" fill="#249be6" fillRule="evenodd" /></Svg> },
  { icon: <Svg><circle cx="10" cy="10" r="8.800" fill="#2ba3dc" /><path d="m4 10 11-4.500-1.800 9.300-3.500-2.500-1.700 1.700-.4-3 5-4-6 3.800z" fill="#fff" /></Svg> },
  { open: true, icon: <svg viewBox="0 0 24 20" className="ml-[3px] h-[20px] w-[26px]"><path d="m1.500 19 1.300-4.800A8.500 8.500 0 1 1 6.500 17.700z" fill="#21281f" stroke="#27c654" strokeWidth="1.900" /><path d="M7.500 6c-1.500 2 2.500 7.500 6.500 7.500 1.500-.5 1.500-1.500 1.200-2.200L13 10.500l-1 1.200c-1-.5-2-1.500-2.500-2.500l.8-1L9.500 6z" fill="#27c654" /><circle cx="18" cy="14" r="5.500" fill="#292b28" stroke="#ddd" strokeWidth=".8" /><text x="18" y="17.200" fontSize="9" textAnchor="middle" fill="#fff" fontFamily="Open Sans">2</text></svg> },
  { open: true, active: true, icon: <Chrome><circle cx="14.500" cy="14.500" r="5.500" fill="#5b352e" /><text x="14.500" y="17" fontSize="7" textAnchor="middle" fill="#fff" fontFamily="Open Sans">k</text></Chrome> },
  { open: true, icon: <Svg><rect x=".5" y=".5" width="19" height="19" rx="3" fill="#f17423" /><path d="M4 4h4l2 2.500L12 4h4v4l-2 2 2 2v4h-4.500v-3h-3v3H4v-4l2-2-2-2z" fill="none" stroke="#fff" strokeWidth="2" /></Svg> },
  { open: true, icon: <Svg><path d="m10 .8 8 4.600v9.200l-8 4.600-8-4.600V5.400z" fill="#539e43" /><path d="m10 .8 8 4.600v9.200l-8 4.600z" fill="#3e863d" /></Svg> },
  { open: true, icon: <Svg><rect x="1" y="2" width="18" height="16" fill="#e8ecee" /><rect x="1" y="2" width="18" height="2.500" fill="#aebdc4" /><rect x="3" y="6" width="8" height="10" fill="#3c8a86" /><path d="M12.500 7h5M12.500 10h5M12.500 13h5" stroke="#9aa" /></Svg> },
  { open: true, icon: <Svg><circle cx="10" cy="10" r="9.300" fill="#ff6c37" /><path d="m5 15 3-5 6-5 1.500 1.500L10.500 12zM8 10l2.500 2" fill="#fff" stroke="#ffd8ca" strokeWidth=".8" /></Svg> },
  { open: true, icon: <Chrome><circle cx="14.700" cy="14.500" r="5.200" fill="#fff" /></Chrome> },
];

function Taskbar() {
  return (
    <footer className="flex h-8 shrink-0 items-center bg-[#22231f] font-['Noto_Sans','Open_Sans',sans-serif] text-[#f1f1f1]">
      <div className="flex w-[38px] shrink-0 justify-center">
        <svg viewBox="0 0 14 14" className="size-[13px]" fill="#fff"><path d="M0 2 6.300 1.100v5.500H0zM7 1 14 0v6.600H7zM0 7.400h6.300v5.500L0 12zM7 7.400h7V14l-7-1z" /></svg>
      </div>
      <div className="flex h-8 w-[231px] shrink-0 items-center border border-[#5a5b58] bg-[#343534] pl-[9px]">
        <Search className="size-[14px] -scale-x-100" strokeWidth={1.600} />
        <T w={102} className="ml-[9px] text-[11.500px] text-[#cfcfcf]">Type here to search</T>
        <svg viewBox="0 0 64 30" className="ml-auto h-[30px] w-[64px]">
          <path d="M2 30C8 12 28 8 40 14c8 4 6 12 4 16z" fill="#4aa3d4" />
          <path d="M10 26c6-10 18-14 26-10-8 0-16 6-18 14h-8z" fill="#79c1e4" />
          <path d="M7 20c1-6 5-8 9-11 6-1 8 3 7 7l-3 6-8 3z" fill="#b57a67" /><path d="M10 11c3-4 8-4 11-1l-5 6z" fill="#d3a08c" />
          <path d="M35 8c3-5 10-6 16-4s13 0 13 4v6l-14 2-11-3z" fill="#7da32f" />
          <path d="M39 12c4-4 11-3 14 1 5-2 10 3 9 9l-6 5-11-8z" fill="#c68872" /><path d="M40 15c6 0 10 2 12 7l-6 2z" fill="#875545" />
          <path d="M48 30c3-6 11-8 16-7v7z" fill="#69a02b" />
        </svg>
      </div>
      {apps.map((app, i) => (
        <div key={i} className={`flex h-8 shrink-0 flex-col items-center justify-between ${i === 0 ? 'w-[39.500px]' : 'w-[39.200px]'} ${app.active ? 'bg-[#51524f]' : ''}`}>
          <span className="flex h-[30px] items-center pt-[1px]">{app.icon}</span>
          <span className={`h-[2px] w-8 ${app.open ? 'bg-[#68b9e6]' : ''}`} />
        </div>
      ))}
      <svg viewBox="0 0 20 20" className="mr-[7px] ml-auto size-[19px] shrink-0"><path d="M1 2h14l2 3-1 4h3v3l-3 3H3v-4H1l1-3-2-2z" fill="#ec8717" /><path d="m1 6 14 .5M3 10.500l13 .5M2 3h13" stroke="#ffad35" /><path d="m6.500 19 3.300-4 3.300 4-3.300-1.500z" fill="#75b832" /></svg>
      <T w={38} className="text-[11px]">IDR/JPY</T>
      <T w={37} className="ml-[8px] text-[11px] text-[#12b512]">+0,23%</T>
      <ChevronUp className="ml-[18px] size-[14px] shrink-0" strokeWidth={1.500} />
      <svg viewBox="0 0 14 8" className="ml-[7px] h-[7px] w-[13px] shrink-0"><rect x=".5" y=".5" width="12" height="7" fill="none" stroke="#fff" /><path d="M2 2h5v4H2zM13 2.500v3" fill="#fff" stroke="#fff" strokeWidth=".6" /></svg>
      <svg viewBox="0 0 12 12" className="ml-[6px] size-[12px] shrink-0" fill="none" stroke="#ddd" strokeWidth=".9"><path d="M1 11C1 5 5 1 11 1M3.500 11C3.500 7 7 3.500 11 3.500M6 11c0-2.500 2.500-5 5-5M8.500 11c0-1.500 1-2.500 2.500-2.500" /></svg>
      <svg viewBox="0 0 14 12" className="ml-[5px] h-[12px] w-[14px] shrink-0" fill="none" stroke="#fff"><path d="M1 4h2l3-3v10L3 8H1zM8 4q1.500 2 0 4" /><path d="M10 2.500q2.500 3.500 0 7M12 1.500q3 4.500 0 9" stroke="#888" /></svg>
      <svg viewBox="0 0 19 12" className="ml-[6px] h-[12px] w-[19px] shrink-0" fill="none" stroke="#eee"><rect x=".5" y=".5" width="18" height="11" /><path d="M2.500 3.500h14M2.500 6h14" strokeDasharray="1.200 1" /><path d="M5 9h9" /></svg>
      <div className="ml-[8px] flex w-[47px] shrink-0 flex-col items-center text-[9.500px] leading-[14.300px]">
        <T w={21}>11:20</T><T w={46.500}>28/06/2024</T>
      </div>
      <svg viewBox="0 0 22 20" className="mt-[3px] mr-[9.500px] ml-[14px] h-[20px] w-[22px] shrink-0"><path d="M1 1h13v10H7l-3 3v-3H1z" fill="#fff" /><path d="M3 4h9M3 6.500h9" stroke="#333" /><circle cx="14" cy="13" r="5.500" fill="#343633" stroke="#aaa" strokeWidth=".8" /><text x="14" y="16" fontSize="8.500" textAnchor="middle" fill="#fff" fontFamily="Open Sans">2</text></svg>
    </footer>
  );
}

export default function App() {
  return (
    <div className="flex h-[720px] w-[1280px] flex-col overflow-hidden bg-[#18191b] font-['Inter',sans-serif]">
      <Browser />
      <main className="flex h-[573px] shrink-0">
        <Rail />
        <Files />
        <div className="flex w-[641px] shrink-0 flex-col"><Canvas /><Debugger /></div>
        <Emulator />
      </main>
      <div className="flex h-[18px] shrink-0 items-center justify-end border-t border-[#2a2b2e] pt-px pr-[9px]">
        <T w={71.500} className="text-[10.500px] text-[#b4b7bb]">Never published</T>
        <span className="mx-[7px] h-[11px] w-px bg-[#34363a]" />
        <Check className="size-[12px] text-[#2fc08d]" />
      </div>
      <Taskbar />
    </div>
  );
}
